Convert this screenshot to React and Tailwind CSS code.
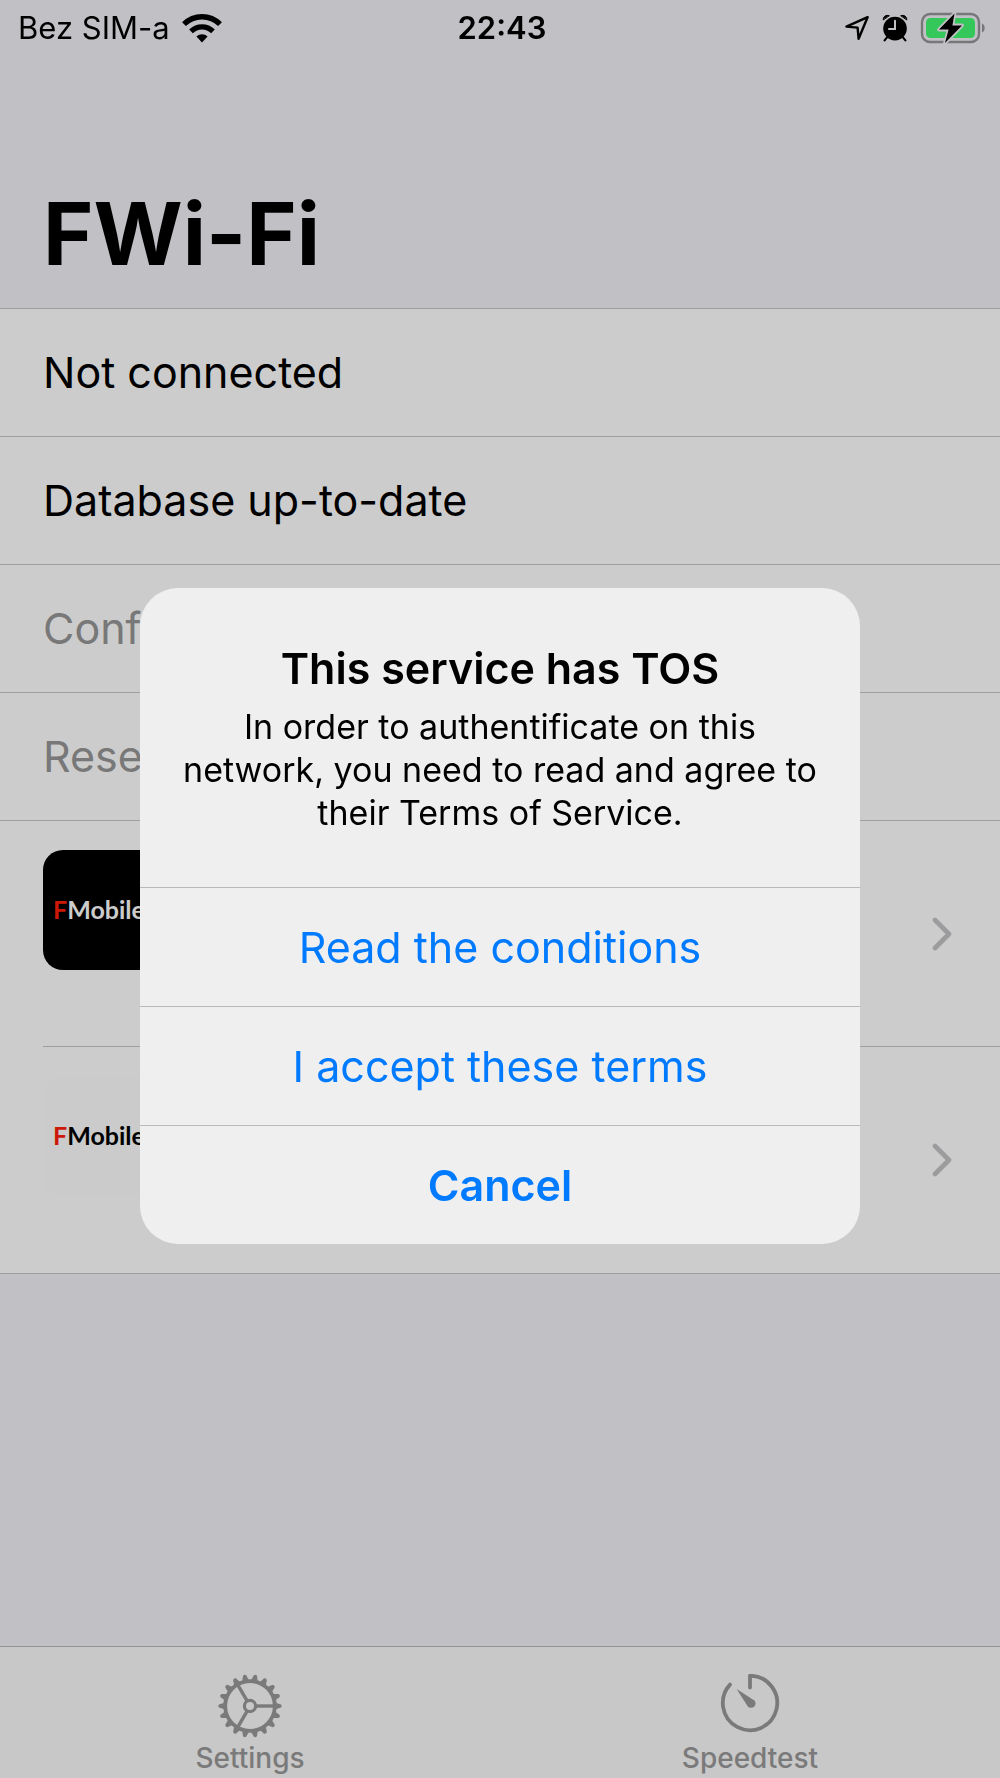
const networks = [
  { id: "dark", name: "FMobile", tile: "bg-black text-white" },
  { id: "light", name: "FMobile", tile: "bg-[#fefefe] text-black" },
];

function WifiIcon() {
  return (
    <svg viewBox="0 0 40 30" className="h-[30px] w-10" fill="none" stroke="#000" aria-hidden="true">
      <path d="M2 11.2 A25.5 25.5 0 0 1 38 11.2" strokeWidth="5.4" />
      <path d="M9 18.4 A15.6 15.6 0 0 1 31 18.4" strokeWidth="5.2" />
      <path d="M20 29.4 L14.4 23.6 A8 8 0 0 1 25.6 23.6 Z" fill="#000" stroke="none" />
    </svg>
  );
}

function LocationIcon() {
  return (
    <svg viewBox="0 0 26 26" className="size-[26px]" fill="none" stroke="#000" strokeWidth="2.4" strokeLinejoin="round" aria-hidden="true">
      <path d="M23.6 2.2 L2.4 11.6 L13.6 12.6 L14.6 23.8 Z" />
    </svg>
  );
}

function AlarmIcon() {
  return (
    <svg viewBox="0 0 26 28" className="h-7 w-[26px]" fill="none" stroke="#000" strokeLinecap="round" aria-hidden="true">
      <circle cx="13" cy="14.6" r="11.8" fill="#000" stroke="none" />
      <path d="M1.2 5.6 C1.2 2.4 4 0.6 7 1.6 Z M24.8 5.6 C24.8 2.4 22 0.6 19 1.6 Z" fill="#000" strokeWidth="1" />
      <path d="M5 23.4 L2.6 26.4 M21 23.4 L23.4 26.4" strokeWidth="2.2" />
      <path d="M13 6.8 V15 H7" stroke="#c2c2c6" strokeWidth="2" />
    </svg>
  );
}

function BatteryIcon() {
  return (
    <svg viewBox="0 0 66 32" className="h-8 w-[66px]" aria-hidden="true">
      <rect x="2" y="2" width="57" height="28" rx="8" fill="none" stroke="#77777a" strokeWidth="2.4" />
      <path d="M62 11.5 C65.6 13 65.6 19 62 20.5 Z" fill="#77777a" />
      <rect x="6" y="6" width="49" height="20" rx="4.5" fill="#34c759" />
      <path d="M34.5 1.5 L19 17.6 H28.6 L25 31 L42 13.4 H32.4 Z" fill="#000" stroke="#c2c2c6" strokeWidth="3.6" strokeLinejoin="round" />
      <path d="M34.5 1.5 L19 17.6 H28.6 L25 31 L42 13.4 H32.4 Z" fill="#000" />
    </svg>
  );
}

function GearIcon() {
  const teeth = Array.from({ length: 18 }, (_, i) => i * 20);
  return (
    <svg viewBox="-32 -32 64 64" className="size-16" fill="none" stroke="currentColor" aria-hidden="true">
      <circle r="24.8" strokeWidth="3.8" />
      <circle r="5.6" strokeWidth="3.2" />
      {teeth.map((deg) => (
        <path key={deg} d="M25 -3.6 L31 -1.6 Q32.4 0 31 1.6 L25 3.6 Z" fill="currentColor" stroke="none" transform={`rotate(${deg})`} />
      ))}
      {[0, 120, 240].map((deg) => (
        <path key={deg} d="M6.4 0 H25" strokeWidth="3.4" transform={`rotate(${deg})`} />
      ))}
    </svg>
  );
}

function TimerIcon() {
  return (
    <svg viewBox="-32 -29 64 64" className="size-16" fill="none" stroke="currentColor" strokeWidth="3.8" strokeLinecap="round" strokeLinejoin="round" aria-hidden="true">
      <path d="M0 -15.5 V-27.2 A27.2 27.2 0 1 1 -20 -18.4" />
      <path d="M-13.4 -14 L4.4 -2.6 A4.4 4.4 0 1 1 -2.2 3.4 Z" fill="currentColor" stroke="none" />
    </svg>
  );
}

function Chevron() {
  return (
    <svg viewBox="0 0 20 34" className="h-[34px] w-5" fill="none" stroke="#c4c4c6" strokeWidth="4.6" strokeLinecap="round" strokeLinejoin="round" aria-hidden="true">
      <path d="M3 3 L17 17 L3 31" />
    </svg>
  );
}

function StatusBar() {
  return (
    <div className="relative z-20 grid h-14 grid-cols-3 items-center pl-[18px] pr-3.5 text-[31px]">
      <div className="flex items-center gap-3">
        <span>Bez SIM-a</span>
        <WifiIcon />
      </div>
      <span className="text-center font-semibold">22:43</span>
      <div className="flex items-center justify-end gap-3">
        <LocationIcon />
        <AlarmIcon />
        <BatteryIcon />
      </div>
    </div>
  );
}

function Row({ children, muted }) {
  return (
    <li className={`flex h-32 items-center border-b border-[#c6c6c8] px-[43px] text-[43px] ${muted ? "text-[#969696]" : "text-black"}`}>
      {children}
    </li>
  );
}

function NetworkRow({ network, last }) {
  return (
    <li className={last ? "border-b border-[#c6c6c8]" : ""}>
      <a href={`#${network.id}`} className={`ml-[43px] flex h-[226px] items-center justify-between pr-12 ${last ? "" : "border-b border-[#c6c6c8]"}`}>
        <span className={`mt-[29px] flex size-[120px] items-center self-start rounded-[20px] pl-2.5 font-['Lato'] text-[25px] font-bold ${network.tile}`}>
          <span className="text-[#ff1f0a]">{network.name[0]}</span>
          {network.name.slice(1)}
        </span>
        <Chevron />
      </a>
    </li>
  );
}

function TabBar() {
  return (
    <nav className="mt-auto grid h-[132px] grid-cols-2 border-t border-[#b8b8b8] bg-[#fafafa] text-[28px] font-medium text-[#999999]">
      <button type="button" className="flex flex-col items-center pt-[27px]">
        <GearIcon />
        <span className="leading-10">Settings</span>
      </button>
      <button type="button" className="flex flex-col items-center pt-[27px]">
        <TimerIcon />
        <span className="leading-10">Speedtest</span>
      </button>
    </nav>
  );
}

function TermsAlert() {
  const action = "h-[119px] border-t border-[#b9b9b9] text-[43px] text-[#007aff]";

  return (
    <div className="fixed inset-0 z-10 flex items-center justify-center bg-black/20 pt-[54px]">
      <div role="alertdialog" aria-labelledby="tos-title" aria-describedby="tos-text" className="flex w-[72%] flex-col overflow-hidden rounded-[38px] bg-[#efefef] text-center">
        <div className="px-10 pb-[53px] pt-[52px]">
          <h2 id="tos-title" className="text-[43px] font-semibold leading-[57px]">This service has TOS</h2>
          <p id="tos-text" className="mt-2 text-[34px] leading-[43px]">
            In order to authentificate on this network, you need to read and agree to their Terms of Service.
          </p>
        </div>
        <button type="button" className={action}>Read the conditions</button>
        <button type="button" className={action}>I accept these terms</button>
        <button type="button" className={`${action} font-semibold`}>Cancel</button>
      </div>
    </div>
  );
}

export default function App() {
  return (
    <div className="flex min-h-screen flex-col bg-[#f2f2f7] font-['Inter','Liberation_Sans',sans-serif] text-black">
      <StatusBar />
      <header className="px-[43px] pb-[19px] pt-[124px]">
        <h1 className="text-[86px] font-bold leading-[109px]">FWi-Fi</h1>
      </header>
      <main>
        <ul className="border-t border-[#c6c6c8] bg-white">
          <Row>Not connected</Row>
          <Row>Database up-to-date</Row>
          <Row muted>Configure</Row>
          <Row muted>Reset</Row>
          {networks.map((network, i) => (
            <NetworkRow key={network.id} network={network} last={i === networks.length - 1} />
          ))}
        </ul>
      </main>
      <TabBar />
      <TermsAlert />
    </div>
  );
}
